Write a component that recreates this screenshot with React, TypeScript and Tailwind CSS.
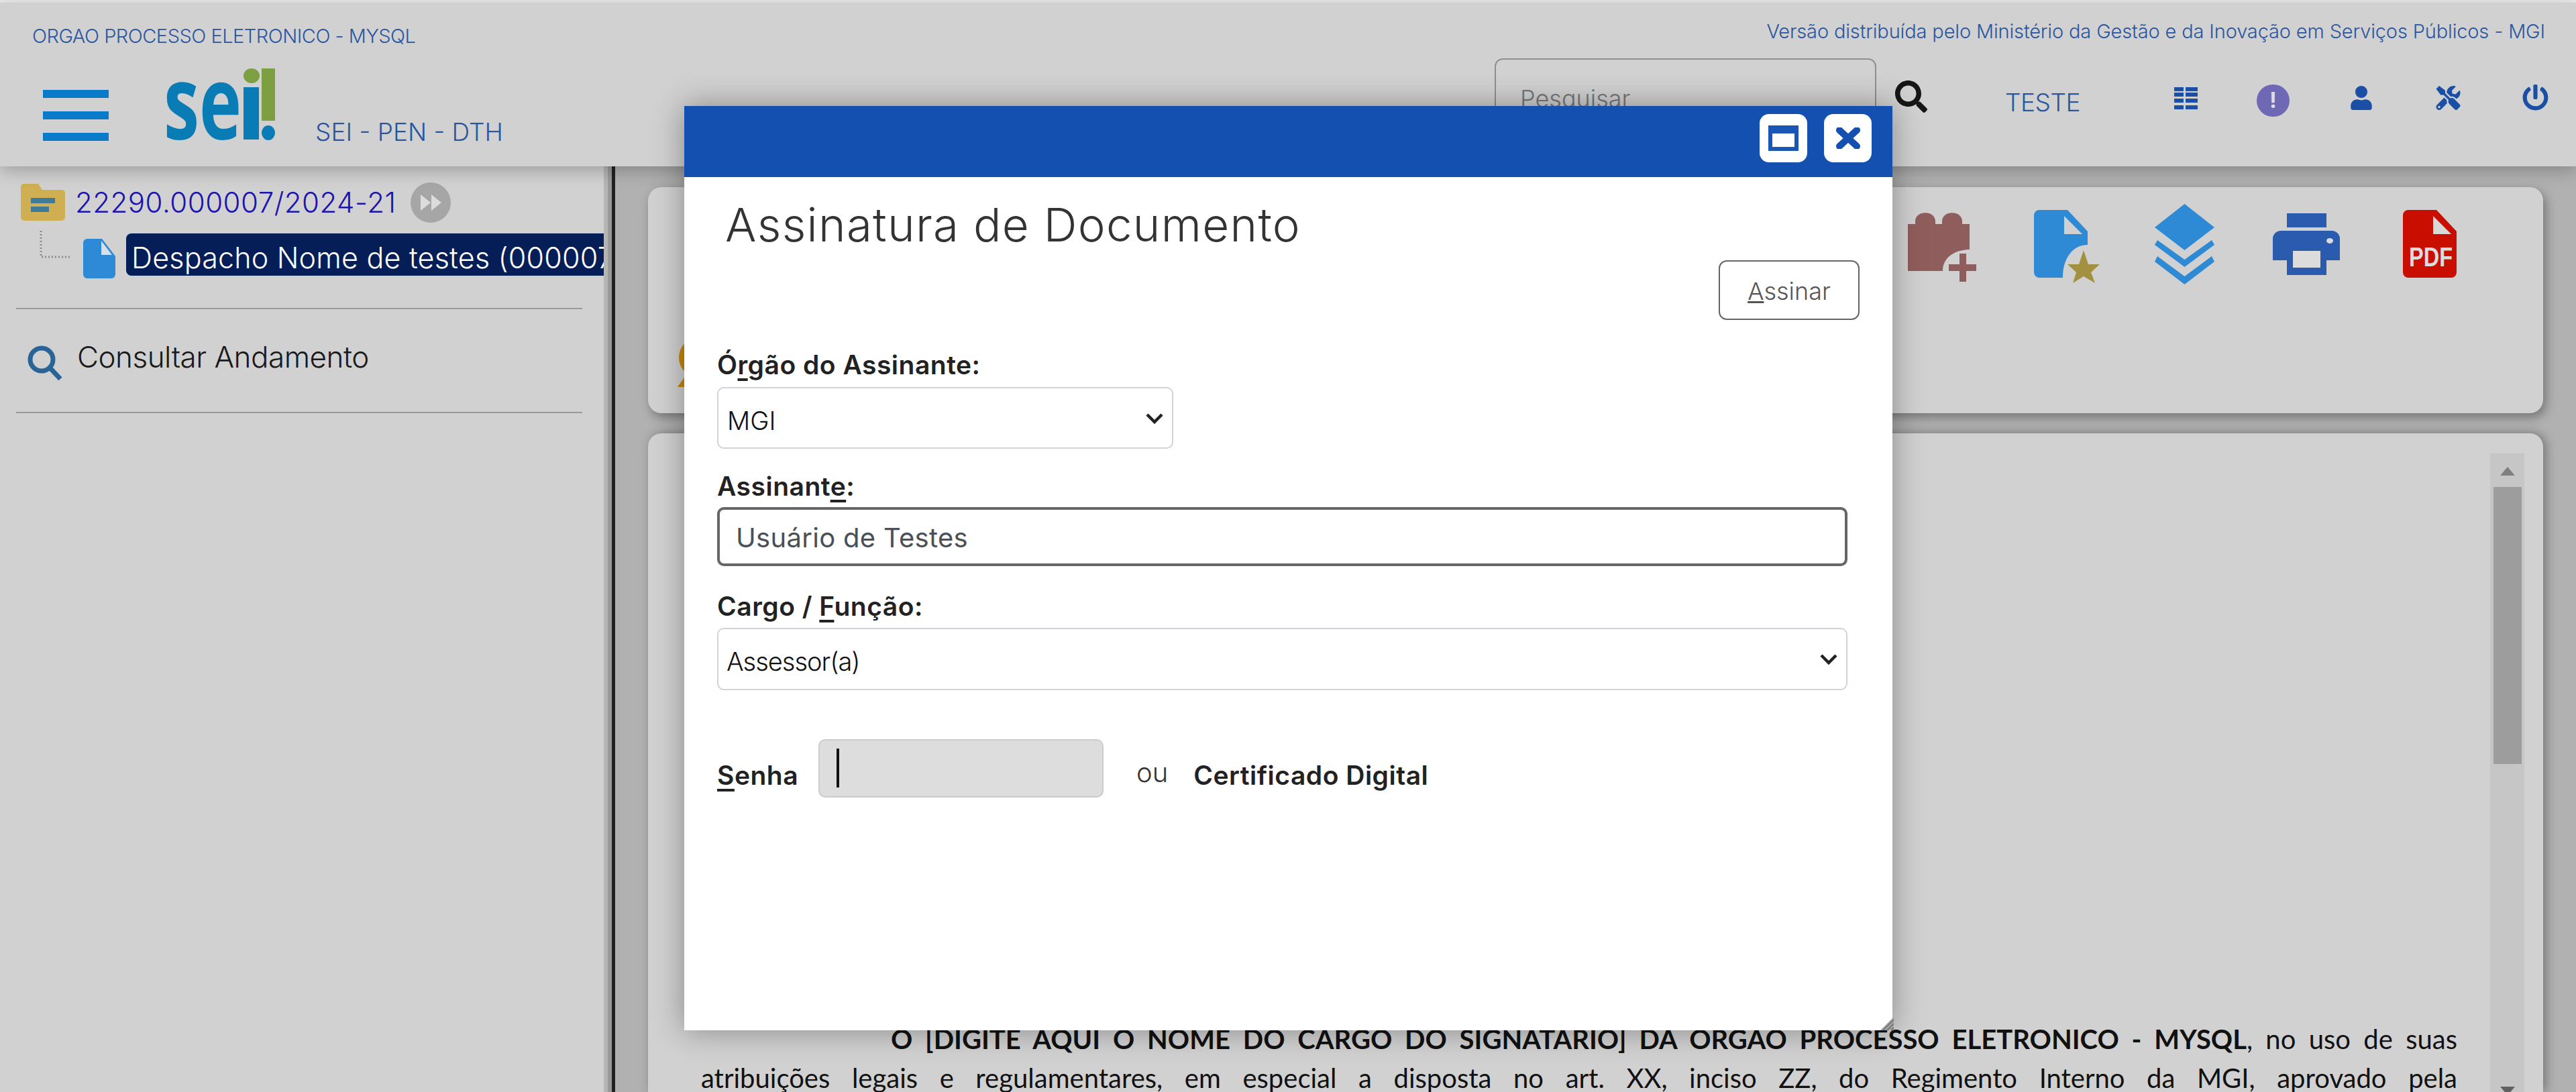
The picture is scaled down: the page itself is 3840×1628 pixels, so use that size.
import React from "react";
import { FaSearch, FaUser, FaTools, FaPowerOff } from "react-icons/fa";

function Ico({ box, w, h, className, children }: { box: string; w: string; h: string; className?: string; children: React.ReactNode }) {
  return (
    <svg viewBox={box} className={`${w} ${h} shrink-0 ${className ?? ""}`}>
      {children}
    </svg>
  );
}

const Chevron = () => (
  <svg viewBox="0 0 28 18" className="w-[28px] h-[18px]">
    <path d="M3 3 L14 14 L25 3" fill="none" stroke="#222" strokeWidth="4.5" />
  </svg>
);

const Key = ({ children }: { children: React.ReactNode }) => (
  <span className="underline decoration-[4px] underline-offset-[6px]">{children}</span>
);

export default function App() {
  return (
    <div className="relative w-[3840px] h-[1628px] overflow-hidden bg-[#b1b1b1] flex flex-col pt-1 [font-family:Inter,sans-serif]">
      <div className="absolute top-0 left-0 w-full h-1 bg-[#ececec]" />
      {/* header */}
      <header className="relative z-10 h-[244px] shrink-0 bg-[#d1d1d1] shadow-[0_6px_24px_rgba(0,0,0,0.25)]">
        <div className="h-[83px] flex justify-between items-start pl-[48px] pr-[46px] text-[#2a55a0] font-light">
          <span className="text-[29px] leading-[34px] mt-[33px] tracking-[-0.5px]">ORGAO PROCESSO ELETRONICO - MYSQL</span>
          <span className="text-[29px] leading-[34px] mt-[26px] tracking-[-0.15px]">Versão distribuída pelo Ministério da Gestão e da Inovação em Serviços Públicos - MGI</span>
        </div>
        <div className="flex items-start">
          <div className="ml-[64px] mt-[47px] w-[98px] flex flex-col gap-[20px]">
            <div className="h-[12px] bg-[#0a7acb]" />
            <div className="h-[12px] bg-[#0a7acb]" />
            <div className="h-[12px] bg-[#0a7acb]" />
          </div>
          <svg viewBox="246 102 164 110" className="ml-[84px] mt-[15px] w-[164px] h-[110px] shrink-0">
            <text x="244" y="208" fontFamily="Open Sans" fontWeight="700" fontSize="152" fill="#0a7cb5" textLength="116" lengthAdjust="spacingAndGlyphs">se</text>
            <rect x="363" y="130" width="23" height="78" fill="#0a7cb5" />
            <ellipse cx="375" cy="113" rx="12" ry="11" fill="#7c9f41" />
            <rect x="390" y="102" width="20" height="78" fill="#7c9f41" />
            <ellipse cx="400" cy="198" rx="10" ry="11" fill="#0a7cb5" />
          </svg>
          <span className="ml-[60px] mt-[90px] text-[37px] leading-[40px] font-light text-[#2a55a0]">SEI - PEN - DTH</span>
          <div className="ml-auto flex items-start">
            <input
              readOnly
              placeholder="Pesquisar"
              className="w-[569px] h-[88px] rounded-[12px] border-2 border-[#8f8f8f] bg-transparent pl-[36px] pt-[32px] text-[36px] font-light placeholder:text-[#777]"
            />
            <FaSearch className="ml-[28px] mt-[33px] w-[48px] h-[48px] text-[#161616]" />
            <span className="ml-[116px] mt-[46px] text-[37px] leading-[40px] font-light text-[#2a55a0] tracking-[-0.5px]">TESTE</span>
            <Ico box="3241 130 35 34" w="w-[35px]" h="h-[34px]" className="ml-[140px] mt-[43px]">
              {[130, 138, 147, 157].map((y) => (
                <g key={y} fill="#1a4fa5">
                  <rect x="3241" y={y} width="14" height="6" />
                  <rect x="3258" y={y} width="18" height="6" />
                </g>
              ))}
            </Ico>
            <div className="ml-[88px] mt-[39px] w-[49px] h-[48px] rounded-full bg-[#6f68b5] flex items-center justify-center text-[#dcdcec] text-[32px] font-bold leading-none">!</div>
            <FaUser className="ml-[89px] mt-[41px] w-[36px] h-[36px] text-[#1a4fa5]" />
            <FaTools className="ml-[93px] mt-[41px] w-[37px] h-[36px] text-[#1a4fa5]" />
            <FaPowerOff className="ml-[91px] mt-[39px] mr-[40px] w-[41px] h-[39px] text-[#1a4fa5]" />
          </div>
        </div>
      </header>

      {/* body */}
      <div className="flex flex-1 min-h-0">
        <aside className="w-[900px] shrink-0 bg-[#d1d1d1] overflow-hidden">
          <div className="flex items-center pl-[31px] pt-[24px] h-[83px]">
            <svg viewBox="0 0 66 55" className="w-[66px] h-[55px] shrink-0">
              <path d="M5 0 H26 L32 9 H61 a5 5 0 0 1 5 5 V50 a5 5 0 0 1 -5 5 H5 a5 5 0 0 1 -5 -5 V5 a5 5 0 0 1 5 -5 Z" fill="#d0ae52" />
              <rect x="15" y="21" width="36" height="8" fill="#3f7a99" />
              <rect x="15" y="34" width="27" height="8" fill="#3f7a99" />
            </svg>
            <span className="ml-[15px] text-[42px] leading-[48px] font-light text-[#1c14b0] tracking-[0.5px] w-[484px] shrink-0 whitespace-nowrap">22290.000007/2024-21</span>
            <svg viewBox="0 0 60 60" className="ml-[16px] w-[60px] h-[60px] shrink-0">
              <circle cx="30" cy="30" r="30" fill="#a6a6a6" />
              <path d="M15 18 L30 30 L15 42 Z M31 18 L46 30 L31 42 Z" fill="#dcdcdc" />
            </svg>
          </div>
          <div className="flex items-start h-[67px] mt-[13px]">
            <svg viewBox="0 0 48 42" className="ml-[59px] w-[48px] h-[42px] shrink-0">
              <path d="M2 0 V39 H47" fill="none" stroke="#8b8b8b" strokeWidth="3" strokeDasharray="2 3" />
            </svg>
            <svg viewBox="0 0 48 59" className="ml-[17px] mt-[12px] w-[48px] h-[59px] shrink-0">
              <path d="M6 0 H28 L48 26 V53 a6 6 0 0 1 -6 6 H6 a6 6 0 0 1 -6 -6 V6 a6 6 0 0 1 6 -6 Z" fill="#2e8ad6" />
              <path d="M27 3 L43 24 H27 Z" fill="#d8dfe6" />
            </svg>
            <div className="ml-[16px] mt-[4px] flex-1 min-w-0 h-[63px] rounded-l-[8px] bg-[#051e57] pl-[8px] text-[43px] leading-[72px] font-light text-white whitespace-nowrap overflow-hidden tracking-[0.2px]">
              Despacho Nome de testes (000007/2024)
            </div>
          </div>
          <hr className="mx-[24px] mt-[48px] w-[844px] border-0 h-[2px] bg-[#999]" />
          <div className="flex items-start h-[153px]">
            <svg viewBox="0 0 52 52" className="ml-[41px] mt-[54px] w-[52px] h-[52px] shrink-0">
              <circle cx="21" cy="21" r="17" fill="none" stroke="#2a6496" strokeWidth="7" />
              <path d="M33 33 L49 50" stroke="#2a6496" strokeWidth="7" fill="none" />
            </svg>
            <span className="ml-[22px] mt-[46px] text-[44px] leading-[50px] font-light text-[#1a1a1a] tracking-[-0.5px]">Consultar Andamento</span>
          </div>
          <hr className="mx-[24px] w-[844px] border-0 h-[2px] bg-[#999]" />
        </aside>

        <div className="w-[17px] shrink-0 flex">
          <div className="w-[6px] bg-[#b5b5b5]" />
          <div className="w-[6px] bg-[#9a9a9a]" />
          <div className="w-[5px] bg-[#222]" />
        </div>

        <main className="flex-1 min-w-0 flex flex-col pl-[49px] pr-[49px] pt-[31px] gap-[30px]">
          <section className="relative h-[337px] shrink-0 rounded-[20px] bg-[#d1d1d1] shadow-[4px_6px_16px_rgba(0,0,0,0.35)]">
            <div className="flex justify-end pr-[129px] pt-[25px]">
              <Ico box="2844 304 102 120" w="w-[102px]" h="h-[120px]">
                <path d="M2844 334 H2855 V330 C2855 313 2885 313 2885 330 V334 H2895 V330 C2895 313 2925 313 2925 330 V334 H2936 V372 C2920 372 2896 380 2896 404 H2844 Z" fill="#8f5e5c" />
                <path d="M2921 378 H2931 V394 H2946 V404 H2931 V420 H2921 V404 H2905 V394 H2921 Z" fill="#8f5e5c" />
              </Ico>
              <Ico box="3032 304 98 120" w="w-[98px]" h="h-[120px]" className="ml-[86px]">
                <path d="M3040 313 H3082 L3112 345 V365 C3090 365 3075 385 3075 414 H3040 a8 8 0 0 1 -8 -8 V321 a8 8 0 0 1 8 -8 Z" fill="#2e8ad4" />
                <path d="M3077 322 L3104 349 H3077 Z" fill="#d1d1d1" />
                <path d="M3106 373 L3113 394 L3130 394 L3117 406 L3123 422 L3106 412 L3090 422 L3095 406 L3082 394 L3099 394 Z" fill="#a39040" />
              </Ico>
              <Ico box="3212 304 89 120" w="w-[89px]" h="h-[120px]" className="ml-[82px]">
                <path d="M3256.5 304 L3301 339 L3256.5 373 L3212 339 Z" fill="#2e8ad4" />
                <path d="M3216 358 L3256.5 387 L3297 358 L3301 365 L3256.5 398 L3212 365 Z" fill="#2e8ad4" />
                <path d="M3216 382 L3256.5 412 L3297 382 L3301 390 L3256.5 424 L3212 390 Z" fill="#2e8ad4" />
              </Ico>
              <Ico box="3388 304 100 120" w="w-[100px]" h="h-[120px]" className="ml-[87px]">
                <rect x="3409" y="318" width="59" height="21" fill="#2b5bae" />
                <path d="M3400 344 H3476 a12 12 0 0 1 12 12 V388 H3468 V410 H3409 V388 H3388 V356 a12 12 0 0 1 12 -12 Z" fill="#2b5bae" />
                <rect x="3418" y="374" width="41" height="25" fill="#dcdcdc" />
                <ellipse cx="3473" cy="359" rx="5" ry="4" fill="#dcdcdc" />
              </Ico>
              <Ico box="3582 304 80 120" w="w-[80px]" h="h-[120px]" className="ml-[94px]">
                <path d="M3590 313 H3632 L3662 345 V406 a8 8 0 0 1 -8 8 H3590 a8 8 0 0 1 -8 -8 V321 a8 8 0 0 1 8 -8 Z" fill="#c90e00" />
                <path d="M3627 322 L3654 349 H3627 Z" fill="#d8d8d8" />
                <text x="3591" y="397" fontFamily="Liberation Sans" fontWeight="700" fontSize="40" fill="#dcdcdc" textLength="65" lengthAdjust="spacingAndGlyphs">PDF</text>
              </Ico>
            </div>
            <svg viewBox="0 0 70 74" className="ml-[44px] mt-[79px] w-[70px] h-[74px]">
              <circle cx="32" cy="30" r="30" fill="#c8880a" />
              <path d="M0 74 L14 54 H40 V74 Z" fill="#c8880a" />
            </svg>
          </section>

          <section className="flex-1 min-h-0 rounded-t-[20px] bg-[#d1d1d1] shadow-[4px_0_16px_rgba(0,0,0,0.35)] overflow-hidden flex">
            <div className="flex-1 min-w-0 pl-[79px] pr-[49px] mt-[874px] text-[40px] leading-[58px] text-[#111] [font-family:Lato,sans-serif]">
              <div className="h-[58px] text-justify [text-align-last:justify] indent-[283px]">
                <strong>O [DIGITE AQUI O NOME DO CARGO DO SIGNATARIO] DA ORGAO PROCESSO ELETRONICO - MYSQL</strong>, no uso de suas
              </div>
              <div className="h-[58px] text-justify [text-align-last:justify]">
                atribuições legais e regulamentares, em especial a disposta no art. XX, inciso ZZ, do Regimento Interno da MGI, aprovado pela
              </div>
            </div>
            <div className="w-[51px] mr-[28px] mt-[30px] bg-[#c6c6c6] flex flex-col items-center shrink-0">
              <div className="mt-[20px] w-0 h-0 border-x-[11px] border-x-transparent border-b-[13px] border-b-[#808080]" />
              <div className="mt-[17px] w-[42px] h-[413px] bg-[#9d9d9d]" />
              <div className="mt-auto mb-[-5px] w-0 h-0 border-x-[11px] border-x-transparent border-t-[13px] border-t-[#606060]" />
            </div>
          </section>
        </main>
      </div>

      {/* dialog */}
      <div className="absolute z-20 left-[1020px] top-[158px] w-[1801px] h-[1378px] bg-white shadow-[0_0_44px_rgba(0,0,0,0.35)] flex flex-col">
        <div className="h-[106px] shrink-0 bg-[#1450b0] flex justify-end items-start pt-[12px] pr-[31px] gap-[25px]">
          <button className="w-[71px] h-[72px] rounded-[14px] bg-white flex items-center justify-center">
            <span className="block w-[45px] h-[38px] border-[6px] border-t-[12px] border-[#1c56b4]" />
          </button>
          <button className="w-[71px] h-[72px] rounded-[14px] bg-white flex items-center justify-center">
            <svg viewBox="0 0 36 32" className="w-[36px] h-[32px]">
              <path d="M5 4 L31 28 M31 4 L5 28" fill="none" stroke="#1450b0" strokeWidth="10" strokeLinecap="round" />
            </svg>
          </button>
        </div>
        <h1 className="ml-[61px] mt-[31px] text-[69px] leading-[80px] font-light text-[#333] tracking-[1.3px]">Assinatura de Documento</h1>
        <div className="flex justify-end pr-[49px] mt-[13px]">
          <button className="w-[210px] h-[89px] rounded-[12px] border-2 border-[#666] text-[36px] leading-[88px] font-light text-[#555]">
            <u>A</u>ssinar
          </button>
        </div>
        <div className="pl-[49px] pr-[67px] text-[39px] font-semibold text-[#222] tracking-[0.5px]">
          <div className="mt-[41px] h-[48px] leading-[52px]">Ó<Key>r</Key>gão do Assinante:</div>
          <div className="relative mt-[11px] w-[680px] h-[92px] rounded-[10px] border-2 border-[#ced4da] pl-[13px] text-[38px] tracking-normal leading-[96px] font-light text-[#111]">
            MGI
            <span className="absolute right-[12px] top-[36px] flex"><Chevron /></span>
          </div>
          <div className="mt-[30px] h-[48px] leading-[52px]">Assinant<Key>e</Key>:</div>
          <input
            readOnly
            value="Usuário de Testes"
            className="mt-[9px] block w-[1685px] h-[88px] rounded-[10px] border-4 border-[#666] pl-[24px] pt-[3px] text-[40px] tracking-[0.3px] font-normal text-[#495057] outline-none"
          />
          <div className="mt-[34px] h-[48px] leading-[52px]">Cargo / <Key>F</Key>unção:</div>
          <div className="relative mt-[10px] w-[1685px] h-[93px] rounded-[10px] border-2 border-[#ced4da] pl-[12px] text-[38px] tracking-[-1px] leading-[97px] font-light text-[#111]">
            Assessor(a)
            <span className="absolute right-[12px] top-[36px] flex"><Chevron /></span>
          </div>
          <div className="mt-[73px] flex items-start">
            <span className="mt-[30px] w-[151px] leading-[48px]"><Key>S</Key>enha</span>
            <div className="relative w-[425px] h-[87px] rounded-[10px] border-2 border-[#ccc] bg-[#dddddd]">
              <div className="absolute left-[25px] top-[12px] w-[4px] h-[58px] bg-[#111]" />
            </div>
            <span className="ml-[49px] mt-[26px] leading-[48px] text-[40px] tracking-normal font-light text-[#333]">ou</span>
            <span className="ml-[38px] mt-[30px] leading-[48px]">Certificado Digital</span>
          </div>
        </div>
        <svg viewBox="0 0 20 20" className="absolute right-[-2px] bottom-0 w-[20px] h-[20px]">
          <path d="M20 0 L20 20 L0 20 Z" fill="#a8a8a8" />
          <path d="M20 4 L4 20 M20 10 L10 20 M20 16 L16 20" stroke="#777" strokeWidth="2" />
        </svg>
      </div>
    </div>
  );
}
